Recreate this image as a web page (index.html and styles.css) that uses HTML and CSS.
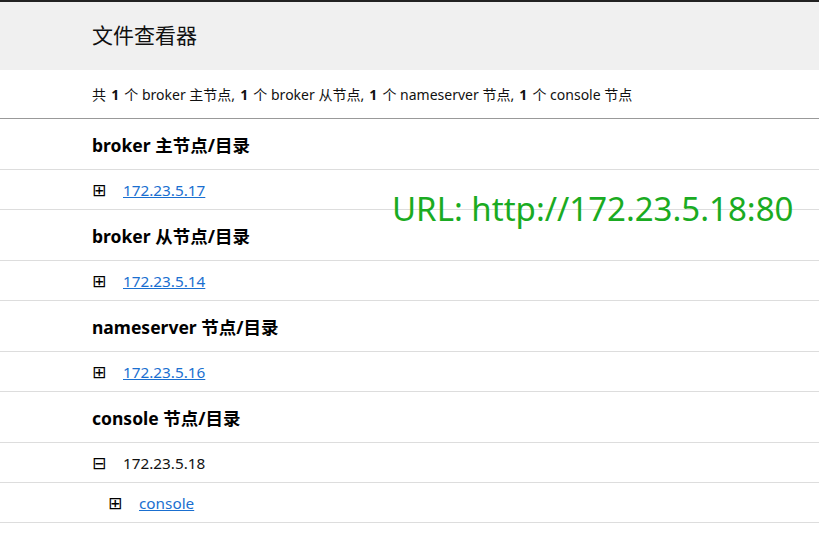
FILE: index.html
```html
<!DOCTYPE html>
<html lang="zh">
<head>
<meta charset="utf-8">
<title>文件查看器</title>
<link rel="stylesheet" href="styles.css">
</head>
<body>
<header class="top">
  <h1 class="title">文件查看器</h1>
</header>
<p class="summary">共 <b>1</b> 个 broker 主节点, <b>1</b> 个 broker 从节点, <b>1</b> 个 nameserver 节点, <b>1</b> 个 console 节点</p>
<main class="list">
  <h2 class="section">broker 主节点/目录</h2>
  <div class="row"><span class="ico">⊞</span><a href="#">172.23.5.17</a></div>
  <h2 class="section">broker 从节点/目录</h2>
  <div class="row"><span class="ico">⊞</span><a href="#">172.23.5.14</a></div>
  <h2 class="section">nameserver 节点/目录</h2>
  <div class="row"><span class="ico">⊞</span><a href="#">172.23.5.16</a></div>
  <h2 class="section">console 节点/目录</h2>
  <div class="row"><span class="ico">⊟</span><span class="plain">172.23.5.18</span></div>
  <div class="row sub"><span class="ico">⊞</span><a href="#">console</a></div>
</main>
<div class="url">URL: http://172.23.5.18:80</div>
</body>
</html>
```
FILE: styles.css
```css
html, body {
  margin: 0;
  padding: 0;
  background: #fff;
}
body {
  font-family: "Noto Sans", "Noto Sans CJK SC", sans-serif;
  color: #111;
  position: relative;
}
.top {
  border-top: 2px solid #222;
  background: #f0f0f0;
  height: 68px;
  box-sizing: content-box;
  display: flex;
  align-items: center;
  padding-left: 92px;
}
.title {
  margin: 0 0 4px;
  font-family: "Noto Sans CJK SC", sans-serif;
  font-weight: 400;
  font-size: 21px;
  line-height: 1;
  color: #111;
}
.summary {
  margin: 0;
  height: 49px;
  box-sizing: border-box;
  display: flex;
  align-items: center;
  padding-left: 92px;
  font-size: 14px;
  border-bottom: 1px solid #999;
  white-space: pre;
}
.summary b { margin: 0 1.5px; }
.section {
  margin: 0;
  height: 51px;
  box-sizing: border-box;
  display: flex;
  align-items: center;
  padding-left: 92px;
  font-size: 17.5px;
  font-weight: 700;
  border-bottom: 1px solid #ddd;
  color: #000;
}
.row {
  height: 40px;
  box-sizing: border-box;
  display: flex;
  align-items: center;
  padding-left: 92px;
  font-size: 15.3px;
  border-bottom: 1px solid #ddd;
}
.row.sub { padding-left: 108px; }
.ico {
  font-family: "DejaVu Sans", sans-serif;
  font-size: 17px;
  width: 31px;
  color: #000;
}
.row a {
  color: #1a6fd0;
  text-decoration: underline;
}
.plain { color: #111; }
.url {
  position: absolute;
  left: 392px;
  top: 187px;
  font-size: 33px;
  color: #1aab22;
  line-height: 44px;
}
```
